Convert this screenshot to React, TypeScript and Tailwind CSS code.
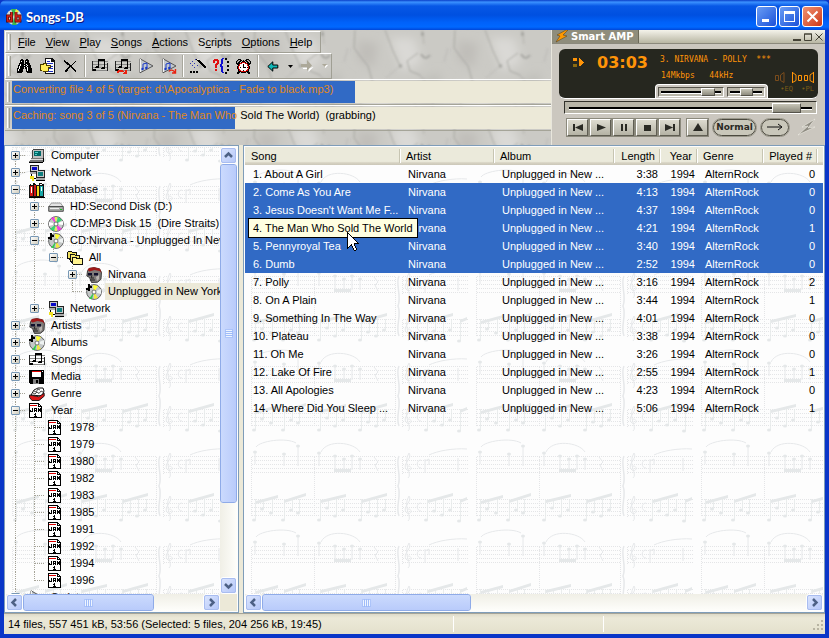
import type { ReactNode } from 'react';
import clsx from 'clsx';

const palette: Record<string, string> = {
    k: '#000000',
    w: '#ffffff',
    r: '#e00000',
    g: '#808080',
    s: '#c0c0c0',
};

function Pixels({ rows, className }: { rows: string[]; className?: string }) {
    const width = Math.max(...rows.map((r) => r.length));
    return (
        <svg width={width} height={rows.length} shapeRendering="crispEdges" className={clsx('shrink-0', className)} aria-hidden="true">
            {rows.flatMap((row, y) =>
                [...row].map((ch, x) =>
                    palette[ch] ? <rect key={`${x}-${y}`} x={x} y={y} width="1" height="1" fill={palette[ch]} /> : null
                )
            )}
        </svg>
    );
}

function Icon({ children, crisp }: { children: ReactNode; crisp?: boolean }) {
    return (
        <svg width="16" height="16" viewBox="0 0 16 16" fill="none" shapeRendering={crisp ? 'crispEdges' : 'auto'} className="shrink-0" aria-hidden="true">
            {children}
        </svg>
    );
}

const calendar = [
    'kkkkkkkkkk...',
    'kwwwwwwwwkk..',
    'krrrrrrrwkwk.',
    'kwwwwwwwwkkkk',
    'kwwwwwwwwwwwk',
    'kwwkwkkkwkwkk',
    'kwwkwkwkwkkkk',
    'kkwkwkkkwkkkk',
    'kkkkwkwkwkwkk',
    'kwwwwwwwwwwwk',
    'kwwwwwkwwwwwk',
    'kwwwwkkwwwwwk',
    'kwwwwwkwwwwwk',
    'kwwwwkkkwwwwk',
    'kkkkkkkkkkkkk',
];

const floppy = [
    'kkkkkkkkkkkkkkk',
    'kkkrrrrrrrrrkwk',
    'kkkwwwwwwwwwkkk',
    'kkkwwwwwwwwwkkk',
    'kkkwwwwwwwwwkkk',
    'kkkwwwwwwwwwkkk',
    'kkkwwwwwwwwwkkk',
    'kkkkkkkkkkkkkkk',
    'kkkkkkkkkkkkkkk',
    'kkkkggggggkkkkk',
    'kkkkgggkkgkkkkk',
    'kkkkgggkkgkkkkk',
    'kkkkgggkkgkkkkk',
    '.kkkggggggkkkkk',
];

const binoculars = [
    '....kk...kk....',
    '...kkkk.kkkk...',
    '...kwkk.kwkk...',
    '...kkkk.kkkk...',
    '..kkkkk.kkkkk..',
    '..kwkkkkkwkkk..',
    '.kkwkkkwkkwkkk.',
    '.kwkkkkkkwkkkk.',
    '.kwkkkkwkkwkkk.',
    'kkwkkkk.kkwkkkk',
    'kwkkkk...kwkkkk',
    'kwkkkk...kwkkkk',
    'kkkkkk...kkkkkk',
    'kkkkk.....kkkkk',
];

const deleteMark = [
    'k............',
    'kk.........k.',
    '.kkk......k..',
    '..kkk....k...',
    '...kkk..k....',
    '.....kkk.....',
    '.....kkk.....',
    '....kk.kk....',
    '...kk...kk...',
    '..kk.....kk..',
    '.kkk......kk.',
    '.kk........k.',
];

const alarm = [
    '..kkk.....kkk..',
    '.kgskk.k.kksgk.',
    'kgskk.kkk.kksgk',
    'kskk.krrrk.kksk',
    'kkkkrrwwwrrkkkk',
    '.kkrwwwkwwwrkk.',
    '..krwwwkwwwrk..',
    '.krwwwwkwwwwrk.',
    '.krwkwwkkkwkrk.',
    '.krwwwwwwwwwrk.',
    '..krwwwwwwwrk..',
    '..krrwwkwwrrk..',
    '..kkkrrrrrkkk..',
    '.kkk.kkkkk.kkk.',
    '.kk.........kk.',
];

const pointer = [
    'k...........',
    'kk..........',
    'kwk.........',
    'kwwk........',
    'kwwwk.......',
    'kwwwwk......',
    'kwwwwwk.....',
    'kwwwwwwk....',
    'kwwwwwwwk...',
    'kwwwwwwwwk..',
    'kwwwwwwwwwk.',
    'kwwwwwwkkkkk',
    'kwwwkwwk....',
    'kwwkkwwk....',
    'kwk..kwwk...',
    'kk...kwwk...',
    'k.....kwwk..',
    '......kwwk..',
    '.......kk...',
];

function SongIcon({ queued }: { queued?: boolean }) {
    return (
        <Icon crisp>
            <path d="M0 3h16M0 6h16M0 9h16M0 12h16" transform="translate(0 .5)" stroke="#8a8a88" />
            <path d="M0 3v10M15 5v8" transform="translate(.5 0)" stroke="#222" />
            <path d="M6 1h7v2H6zM6 1h1v8H6zM12 1h1v9h-1zM4 8h3v2H3V9h1zM10 9h3v2H9v-1h1zM1 11h3v2H1z" fill="#000" />
            {queued && <path d="M2 15v-2h1v-1h5v1h1v1h1v-2h2v4H8v-1h1v-1H4v1z" fill="#e82010" />}
        </Icon>
    );
}

function PlayIcon({ queued }: { queued?: boolean }) {
    return (
        <Icon>
            <path d="M2 .8v14L15 8z" fill="#c2c8cc" stroke="#555" />
            <path d="M2.500 1v13" stroke="#f4f4f4" />
            <path d="M5 11V6l4-1v5" stroke="#1838c8" />
            <circle cx="4.500" cy="11" r="1.200" fill="#1838c8" />
            <circle cx="8.300" cy="10" r="1.200" fill="#1838c8" />
            {queued && <path d="M8 13.500c1-2 4-2 6 1M14.500 11v4H11" stroke="#e82010" strokeWidth="1.400" />}
        </Icon>
    );
}

function DiscIcon({ notes }: { notes?: boolean }) {
    return (
        <Icon>
            <circle cx="8" cy="8" r="7.400" fill="#c4c8c8" stroke="#444" strokeWidth=".8" />
            {notes ? (
                <>
                    <path d="M8 8 7 1l5 1z" fill="#ffff30" />
                    <path d="m8 8-2 7H3z" fill="#30c850" />
                    <path d="m8 8 7-3v5z" fill="#eef2f2" />
                    <path d="m8 8 4 6-4 1z" fill="#f2e840" />
                </>
            ) : (
                <>
                    <path d="M8 8 3 2l3-1zM8 8l6 5-4 2z" fill="#f040e0" />
                    <path d="m8 8-7-2v4zM8 8l7-3v4z" fill="#fff" />
                    <path d="M8 8 10 1l4 3zM8 8l-6 5 4 2z" fill="#30d870" />
                    <path d="m8 8-1-7h2zM8 8l-1 7h2z" fill="#f4f040" />
                </>
            )}
            <circle cx="8" cy="8" r="2" fill="#fff" stroke="#555" strokeWidth=".8" />
            {notes && <path d="M0 4h2V0h2v2h2v2H4v3H2V6H0z" fill="#000" shapeRendering="crispEdges" />}
        </Icon>
    );
}

function ComputerIcon() {
    return (
        <Icon crisp>
            <path d="M4 1h10v9H3V2z" fill="#c0c0c0" />
            <path d="M4 1h10v1H4zM3 2h1v8H3zM14 1h1v9h-1z" fill="#444" />
            <path d="M5 3h7v5H5z" fill="#006868" />
            <path d="M6 4h3v1H6zM6 6h2v1H6z" fill="#50d0c8" />
            <path d="M2 10h12v1H2zM1 12h13v2H0v-1z" fill="#777" />
            <path d="M2 11h12v1H1z" fill="#ddd" />
            <path d="M0 14h14v1H0zM14 10h1v4h-1z" fill="#000" />
        </Icon>
    );
}

function NetworkIcon() {
    return (
        <Icon crisp>
            <path d="M1 0h9v7H1zM7 5h9v8H7z" fill="#222" />
            <path d="M2 1h7v5H2zM8 6h7v6H8z" fill="#c8c8c8" />
            <path d="M3 2h5v3H3z" fill="#0808c8" />
            <path d="M9 7h5v4H9z" fill="#108080" />
            <path d="M1 7h6v2H1zM7 13h9v2H7z" fill="#aaa" />
            <path d="M7 15h9v1H7zM2 9h1v2H2zM3 13h4v1H3z" fill="#000" />
            <path d="M1 11h4v3H1zM3 14h2v2H3z" fill="#f0e020" />
        </Icon>
    );
}

function DatabaseIcon() {
    return (
        <Icon crisp>
            <path d="M1 2h3V1h3v2h3V1h3v1h2v13H0V3z" fill="#111" />
            <path d="M1 4h3v10H1z" fill="#d01818" />
            <path d="M5 3h2v11H5z" fill="#d01818" />
            <path d="M8 4h2v10H8z" fill="#f0d820" />
            <path d="M11 4h3v10h-3z" fill="#18a8a8" />
            <path d="M2 2h2v1H2zM6 1h2v1H6zM11 2h2v1h-2zM2 5h1v6H2zM12 5h1v4h-1z" fill="#fff" />
            <path d="M0 15h16v1H0z" fill="#000" />
        </Icon>
    );
}

function DriveIcon() {
    return (
        <Icon>
            <path d="M3.500 4h9L15 7.500H.8z" fill="#e4e4e4" stroke="#777" strokeWidth=".7" />
            <path d="M.7 7.500h14.600v4.800H.7z" fill="#a8aaa8" stroke="#444" strokeWidth=".9" />
            <path d="M2 9h9v1H2z" fill="#eee" />
            <path d="M12 10h2v1h-2z" fill="#18c020" />
        </Icon>
    );
}

function FoldersIcon() {
    return (
        <Icon crisp>
            <path d="M0 2h1V1h4v1h5v8H2V9H0z" fill="#111" />
            <path d="M1 2h4v1h4v5H1z" fill="#f0e060" />
            <path d="M3 4h5v1h5v8H4v-1H3z" fill="#111" />
            <path d="M4 5h4v1h4v5H4z" fill="#f8e870" />
            <path d="M5 7h5v1h6v7H6v-1H5z" fill="#111" />
            <path d="M6 8h3v1h6v5H6z" fill="#fff390" />
        </Icon>
    );
}

function ArtistIcon() {
    return (
        <Icon>
            <path d="M1.500 4 3 1.500 8 .6l5.500 1.200 2 3.500-.5 7-3.500 3-6 .2-2-5L.8 9z" fill="#7e7a78" stroke="#222" strokeWidth=".8" />
            <path d="M1.500 3 3 1l5-.7 6 1.500L15.500 6l-2-2-5-1-5 1.500z" fill="#a01818" />
            <path d="M2 6h4v2.500H2zM8 6h4v2.500H8z" fill="#10102c" />
            <path d="M6 8.500 5 11h3M4 13h5" stroke="#222" />
            <path d="m10 10 3-2v4l-2 2z" fill="#b8b4b0" />
        </Icon>
    );
}

function GenreIcon() {
    return (
        <Icon>
            <path d="m2 9 3-5 4-2h5l1 3-2 5z" fill="#fff" stroke="#111" />
            <path d="m5 5 2 1 2-3 2 1M4 7l2 1 2-2 2 1.500 2-2.500 2 1" stroke="#222" strokeWidth=".8" />
            <path d="m.6 9 3 .5 6 1.200 5.600-3.500v3L10 14.500H3L.6 11.500z" fill="#d81818" stroke="#111" strokeWidth=".9" />
        </Icon>
    );
}

function AppIcon() {
    return (
        <Icon>
            <circle cx="8" cy="8" r="7.800" fill="#d8dcd8" />
            <path d="M8 8 5 0h5zM8 8l-2 8h5z" fill="#3cb850" />
            <path d="m8 8 2-8 3 2z" fill="#f0e840" />
            <path d="M5.500 3v9M1.500 7h4v5h-4zM10 3v9M10 7h4v5h-4z" stroke="#400" strokeWidth="2.800" />
            <path d="M5.500 3v9M1.500 7h4v5h-4zM10 3v9M10 7h4v5h-4z" stroke="#d82018" strokeWidth="1.500" />
        </Icon>
    );
}

/* Stone texture used behind the toolbars */
function Marble() {
    return (
        <svg className="absolute inset-0 h-full w-full" aria-hidden="true">
            <defs>
                <filter id="marble-soft" x="-20%" y="-20%" width="140%" height="140%">
                    <feGaussianBlur stdDeviation="5" />
                </filter>
                <filter id="marble-vein" x="-10%" y="-10%" width="120%" height="120%">
                    <feGaussianBlur stdDeviation="0.8" />
                </filter>
                <pattern id="marble" x="46" width="100" height="90" patternUnits="userSpaceOnUse">
                    <rect width="100" height="90" fill="#cbcac5" />
                    <g filter="url(#marble-soft)">
                        <path d="M40 8h24l8 24-20 10zM12 52l30 8-4 20-24-6z" fill="#dad9d6" />
                        <path d="M70 50l20-8 2 30-20 8z" fill="#c0bfba" />
                        <path d="M8 10l20 4-4 24-16-8z" fill="#c0beb9" />
                    </g>
                    <g stroke="#9a9994" strokeOpacity=".75" fill="none" filter="url(#marble-vein)">
                        <path d="m5 0-1 18 6 8 8 10 4 14M35 0l8 21 7 15M68 23 57 31l3 10 10 4" />
                        <path d="m72 0 2 14M22 50l12 16M70 45l14 18M90 62l10 10" strokeOpacity=".5" />
                        <path d="M0 18l-6 14M94 32l4-14M50 36 36 48M22 50 10 66l2 24M84 63l-3 27M34 66l18-4 12 9 7 19" strokeOpacity=".35" />
                        <path d="M71 24c3 5 6 5 9 1" strokeWidth="2" />
                        <path d="M71 4h3M49 36h3" strokeWidth="3" />
                    </g>
                </pattern>
            </defs>
            <rect width="100%" height="100%" fill="url(#marble)" />
        </svg>
    );
}

/* Faint sheet music behind the tree and the list */
function SheetMusic({ id }: { id: string }) {
    const low = [[9, 85], [17, 74], [26, 78], [38, 85], [46, 75], [53, 78], [74, 85], [82, 73], [90, 81], [98, 75], [115, 85], [123, 77], [131, 81], [139, 75], [181, 85], [189, 76], [197, 80], [205, 75], [214, 86]];
    const high = [[10, 17], [39, 19], [53, 11], [74, 18], [90, 21], [99, 24], [107, 21], [115, 24]];
    return (
        <svg className="absolute inset-0 h-full w-full" aria-hidden="true">
            <defs>
                <pattern id={id} x="0" y="18" width="225" height="90" patternUnits="userSpaceOnUse">
                    <g stroke="#e4e5e7" strokeDasharray="1 1" fill="none" shapeRendering="crispEdges">
                        <path transform="translate(.5 .5)" d="M6 21h144M6 25h144M6 29h144M6 33h144M6 37h144M157 21h65M157 25h65M157 29h65M157 33h65M157 37h65" />
                        <path transform="translate(.5 .5)" d="M6 64h144M6 68h144M6 72h144M6 76h144M6 80h144M157 64h65M157 68h65M157 72h65M157 76h65M157 80h65" />
                        <path transform="translate(.5 .5)" d="M6 21v60M69 21v60M150 21v60M157 21v17M157 64v17" />
                    </g>
                    <g stroke="#e6e8ea" fill="none">
                        <path d="M11 12c4-6 30-10 40-4M76 17c6-13 33-10 39 0M184 20c8-4 24-7 38-6" />
                        <path d="M10 17v12M39 19v12M53 11v20M74 18v13M90 21v14M99 24v11M107 21v14M115 24v11M129 22l4 5-3 3 3 6M213 23v13" />
                        <path d="M154 21c-4 8 3 20-1 30 4 10-3 20 1 30" strokeWidth="1.500" />
                        <path d="M163 43c5-4-6-14 1-25 4 5-7 11-3 16s8-3 2-3M163 86c5-4-6-14 1-25 4 5-7 11-3 16s8-3 2-3" />
                        <path d="M176 25c-5 0-5 8 0 8M176 68c-5 0-5 8 0 8M180 24v14m0-12 4-2v6" />
                    </g>
                    <g fill="#e5e8e9">
                        <path d="M11 66l22-6v3l-22 6zM39 65l22-7v3l-22 7zM76 65l25-6v3l-25 6zM117 65l25-7v3l-25 7zM183 65l25-7v3l-25 7zM215 65l7-3v3l-7 3zM89 34h17v3H89z" />
                        {low.map(([x, y]) => (
                            <g key={x}>
                                <ellipse cx={x} cy={y} rx="2" ry="1.500" />
                                <path d={`M${x + 1} 64h1v${y - 64}h-1z`} opacity=".8" />
                            </g>
                        ))}
                        {high.map(([x, y]) => (
                            <ellipse key={x} cx={x} cy={y} rx="2" ry="1.500" />
                        ))}
                    </g>
                </pattern>
            </defs>
            <rect width="100%" height="100%" fill={`url(#${id})`} />
        </svg>
    );
}

function TitleBar() {
    const base = 'flex h-[21px] w-[21px] items-center justify-center rounded-[3px] border border-white';
    return (
        <header className="flex h-[30px] shrink-0 items-center rounded-t-md bg-[linear-gradient(180deg,#0a3fc8,#3b91ff_7%,#0758e6_20%,#0050e0_50%,#0062fa_75%,#0068ff_90%,#0046d8)] pt-[3px] pr-[6px] pl-[6px]">
            <AppIcon />
            <h1 className="ml-1 flex-1 font-[Lato] text-[13px] leading-4 font-bold text-white [text-shadow:1px_1px_#0a1883]">Songs-DB</h1>
            <div className="flex gap-[2px]">
                <button aria-label="Minimize" className={clsx(base, 'bg-linear-to-br from-[#6a9cf4] to-[#1c4fd8]')}>
                    <svg width="13" height="13" aria-hidden="true"><path d="M2 9h7v3H2z" fill="#fff" /></svg>
                </button>
                <button aria-label="Maximize" className={clsx(base, 'bg-linear-to-br from-[#6a9cf4] to-[#1c4fd8]')}>
                    <svg width="13" height="13" shapeRendering="crispEdges" aria-hidden="true"><path d="M1 1h11v11H1zM2 4v7h9V4z" fillRule="evenodd" fill="#fff" /></svg>
                </button>
                <button aria-label="Close" className={clsx(base, 'bg-linear-to-br from-[#f09070] to-[#cc3410]')}>
                    <svg width="13" height="13" aria-hidden="true"><path d="m1.500 1.500 10 10m0-10-10 10" stroke="#fff" strokeWidth="2" /></svg>
                </button>
            </div>
        </header>
    );
}

function Grip() {
    return <span className="mx-[2px] my-[2px] w-[3px] shrink-0 self-stretch border-r border-l border-r-[#a09f94] border-l-white" />;
}

function Divider() {
    return <span className="mx-[2px] h-[22px] w-[2px] border-r border-l border-r-white border-l-[#a8a79d]" />;
}

function ToolButton({ label, children, narrow }: { label: string; children: ReactNode; narrow?: boolean }) {
    return (
        <button aria-label={label} className={clsx('flex h-full items-center justify-center', narrow ? 'w-[12px]' : 'w-[23px]')}>
            {children}
        </button>
    );
}

const menus = ['File', 'View', 'Play', 'Songs', 'Actions', 'Scripts', 'Options', 'Help'];
const mnemonic: Record<string, number> = { Scripts: 1 };

const bar = 'flex self-start border border-t-white border-r-[#a09f94] border-b-[#a09f94] border-l-white';

function Bars() {
    return (
        <div className="relative min-w-0 flex-1 overflow-hidden pl-px pt-px">
            <Marble />
            <div className="relative flex flex-col">
                <nav className={clsx(bar, 'h-[22px] items-center pr-[3px]')}>
                    <Grip />
                    {menus.map((m) => {
                        const i = mnemonic[m] ?? 0;
                        return (
                            <button key={m} className="px-[5px] leading-4">
                                {m.slice(0, i)}<u>{m[i]}</u>{m.slice(i + 1)}
                            </button>
                        );
                    })}
                </nav>
                <div className={clsx(bar, 'h-[26px] items-center')}>
                    <Grip />
                    <ToolButton label="Find"><Pixels rows={binoculars} /></ToolButton>
                    <ToolButton label="Properties">
                        <Icon crisp>
                            <path d="M5 0h7l3 3v13H5z" fill="#111" />
                            <path d="M6 1h5v3h3v11H6z" fill="#fff" />
                            <path d="M7 3h3v1H7zM7 5h6v1H7zM9 8h4v1H9zM9 10h4v1H9zM8 13h5v1H8z" fill="#2030c0" />
                            <path d="M0 6h3V5h4v2h4v3H9v3H8v1H3v-1H0z" fill="#4a3c00" />
                            <path d="M1 7h2l1-1h2v2h4v1H8v4H3l-2-1z" fill="#ffec58" />
                        </Icon>
                    </ToolButton>
                    <ToolButton label="Delete"><Pixels rows={deleteMark} /></ToolButton>
                    <Divider />
                    <ToolButton label="Add song"><SongIcon /></ToolButton>
                    <ToolButton label="Queue song"><SongIcon queued /></ToolButton>
                    <ToolButton label="Play song"><PlayIcon /></ToolButton>
                    <ToolButton label="Play queue"><PlayIcon queued /></ToolButton>
                    <Divider />
                    <ToolButton label="Wizard">
                        <Icon crisp>
                            <path d="M6 1h3v1h1v1h1v1h1v1h1v1h1v1h1v1h1v2h-2V9h-1V8h-1V7h-1V6h-1V5H9V4H8V3H7V2H6z" fill="#000" />
                            <path d="M7 1h2v1H7z" fill="#eee" />
                            <path d="M2 3h1v1H2zM0 5h1v1H0zM4 5h1v1H4zM2 7h1v1H2zM4 9h1v1H4zM7 7h1v1H7zM5 1h1v1H5z" fill="#3038b0" />
                            <path d="M0 13h2v2H0zM3 13h2v2H3zM6 13h2v2H6z" fill="#000" />
                        </Icon>
                    </ToolButton>
                    <ToolButton label="Script help">
                        <Icon crisp>
                            <path d="M0 2h1V1h4v1h1v4H5v1H4v3H2V6h1V5h1V3H2v2H0zM2 11h2v2H2z" fill="#e01010" />
                            <path d="M11 0v1h-1v5H9v2h1v6h1v1H9v-1H8V9H7V6h1V1h1V0z" fill="#1010d0" />
                            <path d="M12 0h2v2h-2zM14 3h2v2h-2zM14 7h2v2h-2zM14 11h2v2h-2zM12 14h2v2h-2z" fill="#000" />
                        </Icon>
                    </ToolButton>
                    <ToolButton label="Alarm"><Pixels rows={alarm} /></ToolButton>
                    <Divider />
                    <ToolButton label="Back">
                        <svg width="12" height="11" aria-hidden="true"><path d="m.8 5.500 5-4.700V4h5v3h-5v3.200z" fill="#10b8b8" stroke="#000" /></svg>
                    </ToolButton>
                    <ToolButton label="Back history" narrow>
                        <svg width="5" height="3" aria-hidden="true"><path d="M0 0h5L2.500 3z" /></svg>
                    </ToolButton>
                    <ToolButton label="Forward">
                        <svg width="13" height="12" aria-hidden="true"><path d="m12.500 7-5 5V9H2V8h6z" fill="#fff" /><path d="M11 5.500 6 0v4H0v3h6v4z" fill="#aca899" /></svg>
                    </ToolButton>
                    <ToolButton label="Forward history" narrow>
                        <svg width="6" height="4" aria-hidden="true"><path d="M1 1h5L3.500 4z" fill="#fff" /><path d="M0 0h5L2.500 3z" fill="#aca899" /></svg>
                    </ToolButton>
                </div>
            </div>
            <div className="relative">
                <ProgressRow value={63.6} done="Converting file 4 of 5 (target: d:\Apocalyptica - Fade to black.mp3)" />
                <ProgressRow value={41.4} done="Caching: song 3 of 5 (Nirvana - The Man Who" rest=" Sold The World)  (grabbing)" />
            </div>
        </div>
    );
}

function ProgressRow({ value, done, rest }: { value: number; done: string; rest?: string }) {
    return (
        <div className="flex h-[26px] items-stretch border-t border-b border-t-white border-b-[#a5a498]">
            <Grip />
            <div role="progressbar" aria-valuenow={value} aria-label={done} className="relative my-[1px] flex-1 overflow-hidden bg-[#ece9d8]">
                <div className="absolute inset-y-0 left-0 bg-[#316ac5]" style={{ width: `${value}%` }} />
                <p className="relative pl-px leading-[16px] whitespace-pre text-black">
                    <span className="text-[#e08820]">{done}</span>{rest}
                </p>
            </div>
        </div>
    );
}

const sliderBase =
    'block h-full w-full appearance-none bg-transparent [&::-webkit-slider-runnable-track]:bg-[linear-gradient(#0000_40%,#000_40%,#000_60%,#fff_60%,#fff_70%,#0000_70%)] [&::-webkit-slider-thumb]:appearance-none [&::-webkit-slider-thumb]:border [&::-webkit-slider-thumb]:border-t-white [&::-webkit-slider-thumb]:border-l-white [&::-webkit-slider-thumb]:border-r-[#55534a] [&::-webkit-slider-thumb]:border-b-[#55534a] [&::-webkit-slider-thumb]:bg-linear-to-b [&::-webkit-slider-thumb]:from-[#c8c6b8] [&::-webkit-slider-thumb]:to-[#8d8b7e]';

const transport = [
    { label: 'Previous', d: 'M2 2h2v7H2zM12 2v7L4 5.500z' },
    { label: 'Play', d: 'M3 2v7l9-3.500z' },
    { label: 'Pause', d: 'M4 2h2v7H4zM8 2h2v7H8z' },
    { label: 'Stop', d: 'M4 3h7v6H4z' },
    { label: 'Next', d: 'M10 2h2v7h-2zM2 2v7l8-3.500z' },
];

function Player() {
    const chip = 'flex h-[17px] w-[21px] items-center justify-center border border-t-white border-r-[#5f5d52] border-b-[#5f5d52] border-l-white bg-linear-to-b from-[#dddbcf] to-[#b5b3a5] outline outline-[#8b897c]';
    const slot = 'h-[10px] border border-t-[#55534a] border-r-white border-b-white border-l-[#55534a] bg-[#b9b6a9] px-[2px]';
    return (
        <section aria-label="Smart AMP" className="flex w-[274px] shrink-0 flex-col border-l border-[#e8e6dc] bg-[#cbc7bf]">
            <div className="flex h-[14px] items-stretch border-b border-[#8b897c] bg-linear-to-b from-[#f4f3ea] to-[#b9b7a4]">
                <div className="flex w-[87px] items-center gap-[2px] border-r border-[#6b6958] bg-[#8f8d7c] pl-[3px]">
                    <svg width="14" height="13" aria-hidden="true"><path d="m11 0-9 5 3 1-4 6 11-6-4-1 5-5z" fill="#ff9800" stroke="#5a4620" strokeWidth=".6" /></svg>
                    <h2 className="font-['DejaVu_Sans'] text-[10px] leading-3 font-bold whitespace-nowrap text-white">Smart AMP</h2>
                </div>
                <div className="flex flex-1 items-center justify-end gap-[3px] pr-[2px]">
                    <button aria-label="Minimize player"><svg width="8" height="8" aria-hidden="true"><path d="M0 6h8v2H0z" fill="#444236" /></svg></button>
                    <button aria-label="Maximize player"><svg width="8" height="8" aria-hidden="true"><path d="M.5 1v6.500h7V1zM0 1h8" fill="none" stroke="#444236" /></svg></button>
                    <button aria-label="Close player"><svg width="8" height="8" aria-hidden="true"><path d="m.5.5 7 7m0-7-7 7" stroke="#444236" /></svg></button>
                </div>
            </div>
            <div className="mx-[7px] mt-[5px] flex h-[50px] rounded-md border-b border-white bg-[#26271f] font-['DejaVu_Sans_Mono'] text-[8px] text-[#ff9408]">
                <div className="flex w-[96px] shrink-0 items-start pt-[6px] pl-[14px]">
                    <svg width="13" height="12" className="mt-[2px]" aria-hidden="true" shapeRendering="crispEdges">
                        <path d="M0 1h4v3H0zM6 1h1v1h1v1h1v1h1v1h1v1h-1v1H9v1H8v1H6z" fill="#ff9408" />
                        <path d="M0 7h4v3H0z" fill="#8a6a10" />
                    </svg>
                    <time className="ml-[11px] font-['DejaVu_Sans'] text-[16px] leading-4 font-bold">03:03</time>
                </div>
                <div className="flex min-w-0 flex-1 flex-col">
                    <p className="pt-[6px] pl-[5px] leading-[10px] whitespace-pre">3. NIRVANA - POLLY  ***</p>
                    <div className="flex flex-1 justify-between">
                        <div className="flex flex-col justify-between">
                            <p className="pt-[6px] pl-[6px] leading-[10px] whitespace-pre">14Mkbps   44kHz</p>
                            <div className="flex h-[14px] gap-[3px] rounded-t-sm border border-b-0 border-white bg-[#cbc7bf] px-[2px] pt-[2px] pb-px">
                                <div className={clsx(slot, 'w-[66px]')}>
                                    <input type="range" aria-label="Volume" defaultValue={86} className={clsx(sliderBase, '[&::-webkit-slider-thumb]:h-[8px] [&::-webkit-slider-thumb]:w-[14px]')} />
                                </div>
                                <div className={clsx(slot, 'w-[38px]')}>
                                    <input type="range" aria-label="Balance" defaultValue={50} className={clsx(sliderBase, '[&::-webkit-slider-thumb]:h-[8px] [&::-webkit-slider-thumb]:w-[13px]')} />
                                </div>
                            </div>
                        </div>
                        <div className="flex flex-col items-end justify-between pt-[6px] pr-[4px] pb-[4px]">
                            <svg width="40" height="13" fill="none" aria-hidden="true">
                                <path d="M1.500 4.500h3v5h-3zM10 1.500 6.500 4v5.500l3.500 2z" stroke="#7a4c1c" />
                                <path d="M18.500 1v11M18.500 1.500 22 4v5.500l-3.500 2M24.500 4.500h3v5h-3zM30.500 4.500h3v5h-3zM39.500 1v11M39.500 1.500 36 4v5.500l3.500 2" stroke="#ff9408" />
                            </svg>
                            <p className="text-[7px] leading-[9px] whitespace-pre text-[#7a5c18]">•EQ  •PL</p>
                        </div>
                    </div>
                </div>
            </div>
            <div className="mr-[8px] ml-[12px] mt-[2px] h-[13px] border border-t-[#33322c] border-r-white border-b-white border-l-[#33322c] bg-[#b9b6a9] px-[4px]">
                <input type="range" aria-label="Position" defaultValue={95} className={clsx(sliderBase, '[&::-webkit-slider-thumb]:h-[10px] [&::-webkit-slider-thumb]:w-[29px]')} />
            </div>
            <div className="mt-[4px] flex items-center gap-[2px] pr-[8px] pl-[15px]">
                {transport.map((t) => (
                    <button key={t.label} aria-label={t.label} className={chip}>
                        <svg width="14" height="11" aria-hidden="true"><path d={t.d} fill="#2a2a24" /></svg>
                    </button>
                ))}
                <button aria-label="Eject" className={clsx(chip, 'ml-[5px]')}>
                    <svg width="14" height="11" aria-hidden="true"><path d="M7 1 2 9h10z" fill="#2a2a24" /></svg>
                </button>
                <button className="ml-[3px] flex h-[17px] w-[43px] items-center justify-center rounded-full border border-[#4b493f] bg-[#c9c7ba] font-['DejaVu_Sans'] text-[9px] leading-3 font-bold text-[#2a2a24] outline outline-[#99978a]">Normal</button>
                <button aria-label="Repeat" className="ml-[3px] flex h-[17px] w-[28px] items-center justify-center rounded-full border border-[#4b493f] bg-[#c9c7ba] outline outline-[#99978a]">
                    <svg width="18" height="8" aria-hidden="true"><path d="M1 4h15M12 1l4 3-4 3" fill="none" stroke="#111" /></svg>
                </button>
                <svg width="20" height="18" className="ml-auto" aria-hidden="true">
                    <path d="m18 1-13 8 6-1L1 17l17-8-7 1z" fill="#8f8c82" stroke="#f0eee6" strokeWidth=".6" />
                </svg>
            </div>
        </section>
    );
}

type Node = { label: string; icon: ReactNode; leaf?: boolean; selected?: boolean; children?: Node[] };

const years = ['1978', '1979', '1980', '1982', '1983', '1985', '1991', '1992', '1994', '1996'];

const tree: Node[] = [
    { label: 'Computer', icon: <ComputerIcon /> },
    { label: 'Network', icon: <NetworkIcon /> },
    {
        label: 'Database', icon: <DatabaseIcon />, children: [
            { label: 'HD:Second Disk (D:)', icon: <DriveIcon /> },
            { label: 'CD:MP3 Disk 15  (Dire Straits)', icon: <DiscIcon /> },
            {
                label: 'CD:Nirvana - Unplugged In New York', icon: <DiscIcon notes />, children: [
                    {
                        label: 'All', icon: <FoldersIcon />, children: [
                            { label: 'Nirvana', icon: <ArtistIcon /> },
                            { label: 'Unplugged in New York', icon: <DiscIcon notes />, leaf: true, selected: true },
                        ],
                    },
                ],
            },
            { label: 'Network', icon: <NetworkIcon /> },
        ],
    },
    { label: 'Artists', icon: <ArtistIcon /> },
    { label: 'Albums', icon: <DiscIcon notes /> },
    { label: 'Songs', icon: <SongIcon /> },
    { label: 'Media', icon: <Pixels rows={floppy} /> },
    { label: 'Genre', icon: <GenreIcon /> },
    { label: 'Year', icon: <Pixels rows={calendar} />, children: years.map((y) => ({ label: y, icon: <Pixels rows={calendar} />, leaf: true })) },
    { label: 'Scripts', icon: <PlayIcon /> },
];

function Branch({ nodes, guides }: { nodes: Node[]; guides: boolean[] }) {
    return (
        <>
            {nodes.map((n, i) => {
                const last = i === nodes.length - 1 && guides.length > 0;
                const first = i === 0 && guides.length === 0;
                return (
                    <div key={n.label} role="treeitem" aria-selected={!!n.selected} aria-expanded={n.leaf ? undefined : !!n.children}>
                        <div className="flex h-[17px] items-center">
                            {guides.map((on, g) => (
                                <span key={g} className="flex h-full w-[19px] shrink-0 justify-center">
                                    {on && <span className="w-px border-l border-dotted border-[#a5a397]" />}
                                </span>
                            ))}
                            <span className="relative h-full w-[19px] shrink-0">
                                <span className={clsx('absolute left-[9px] border-l border-dotted border-[#a5a397]', first ? 'top-[8px]' : 'top-0', last ? 'bottom-[8px]' : 'bottom-0')} />
                                <span className="absolute top-[8px] right-0 left-[9px] border-t border-dotted border-[#a5a397]" />
                                {!n.leaf && (
                                    <button aria-label={n.children ? 'Collapse' : 'Expand'} className="absolute top-[4px] left-[5px] flex h-[9px] w-[9px] items-center justify-center rounded-[1px] border border-[#7898b5] bg-linear-to-br from-white to-[#d0ccbc]">
                                        <svg width="5" height="5" shapeRendering="crispEdges" aria-hidden="true"><path d={n.children ? 'M0 2h5v1H0z' : 'M0 2h5v1H0zM2 0h1v5H2z'} /></svg>
                                    </button>
                                )}
                            </span>
                            <span className="ml-[3px] flex w-[18px] shrink-0 items-center pl-px">{n.icon}</span>
                            <span className={clsx('ml-[2px] h-[17px] px-[3px] leading-[17px] whitespace-pre', n.selected && 'bg-[#ece9d8]')}>{n.label}</span>
                        </div>
                        {n.children && <div role="group"><Branch nodes={n.children} guides={[...guides, !last]} /></div>}
                    </div>
                );
            })}
        </>
    );
}

const arrows = {
    up: 'm1 6 3.500-3.500L8 6',
    down: 'm1 3 3.500 3.500L8 3',
    left: 'M6 1 2.500 4.500 6 8',
    right: 'm3 1 3.500 3.500L3 8',
};

function ArrowButton({ dir }: { dir: keyof typeof arrows }) {
    return (
        <button aria-label={`Scroll ${dir}`} className="flex h-[17px] w-[17px] shrink-0 items-center justify-center rounded-[3px] border border-white bg-linear-to-br from-[#dce6fe] to-[#b4c6f8] outline outline-[#a9bdf0] -outline-offset-2">
            <svg width="9" height="9" aria-hidden="true"><path d={arrows[dir]} fill="none" stroke="#4d6185" strokeWidth="2.500" /></svg>
        </button>
    );
}

function ScrollBar({ vertical, size }: { vertical?: boolean; size: number }) {
    return (
        <div className={clsx('flex min-h-0 min-w-0', vertical ? 'w-[17px] flex-col bg-linear-to-r from-[#f0efe6] to-[#fefefb]' : 'h-[17px] flex-1 bg-linear-to-b from-[#f0efe6] to-[#fefefb]')}>
            <ArrowButton dir={vertical ? 'up' : 'left'} />
            <div className="min-h-0 min-w-0 flex-1">
                <div
                    className={clsx('flex items-center justify-center rounded-[3px] border border-white outline outline-[#8fabe8] -outline-offset-1', vertical ? 'w-full bg-linear-to-r from-[#cbdafd] to-[#b9cbfb]' : 'h-full bg-linear-to-b from-[#cbdafd] to-[#b9cbfb]')}
                    style={vertical ? { height: `${size}%` } : { width: `${size}%` }}
                >
                    <span className={clsx('flex justify-between', vertical ? 'h-[7px] w-[6px] flex-col' : 'h-[6px] w-[7px]')}>
                        {[0, 1, 2, 3].map((i) => (
                            <span key={i} className={clsx('bg-[#eef4fe] outline-1 outline-[#8cb0f8]/40', vertical ? 'h-px' : 'w-px')} />
                        ))}
                    </span>
                </div>
            </div>
            <ArrowButton dir={vertical ? 'down' : 'right'} />
        </div>
    );
}

const songs = [
    { title: '1. About A Girl', length: '3:38', played: 0 },
    { title: '2. Come As You Are', length: '4:13', played: 0 },
    { title: "3. Jesus Doesn't Want Me F...", length: '4:37', played: 0 },
    { title: '4. The Man Who Sold The World', length: '4:21', played: 1, hint: true },
    { title: '5. Pennyroyal Tea', length: '3:40', played: 0 },
    { title: '6. Dumb', length: '2:52', played: 0 },
    { title: '7. Polly', length: '3:16', played: 2 },
    { title: '8. On A Plain', length: '3:44', played: 1 },
    { title: '9. Something In The Way', length: '4:01', played: 0 },
    { title: '10. Plateau', length: '3:38', played: 0 },
    { title: '11. Oh Me', length: '3:26', played: 0 },
    { title: '12. Lake Of Fire', length: '2:55', played: 1 },
    { title: '13. All Apologies', length: '4:23', played: 0 },
    { title: '14. Where Did You Sleep ...', length: '5:06', played: 1 },
];

const columns = [
    { name: 'Song', width: 'w-[155px]' },
    { name: 'Artist', width: 'w-[94px]' },
    { name: 'Album', width: 'w-[120px]' },
    { name: 'Length', width: 'w-[46px]', right: true },
    { name: 'Year', width: 'w-[37px]', right: true },
    { name: 'Genre', width: 'w-[66px]' },
    { name: 'Played #', width: 'w-[54px]', right: true },
];

function SongTable() {
    return (
        <table className="relative w-full table-fixed border-collapse leading-[18px] whitespace-nowrap">
            <thead className="h-[18px] bg-[linear-gradient(#ebeadb_80%,#d6d2c2_88%,#cbc7b8)]">
                <tr className="h-[18px]">
                    {columns.map((c) => (
                        <th key={c.name} scope="col" className={clsx('p-0 font-normal', c.width)}>
                            <div className={clsx('my-[2px] h-[14px] border-r border-[#c7c5b2] leading-[14px] shadow-[1px_0_#fff]', c.right ? 'pr-[4px] text-right' : 'pl-[6px] text-left')}>{c.name}</div>
                        </th>
                    ))}
                    <td className="p-0" />
                </tr>
            </thead>
            <tbody>
                {songs.map((s, i) => (
                    <tr key={s.title} aria-selected={i >= 1 && i <= 5} className={clsx('h-[18px]', i >= 1 && i <= 5 && 'bg-[#316ac5] text-white')}>
                        <td className="relative p-0 pl-[8px]">
                            {s.hint ? (
                                <span role="tooltip" className="absolute -top-px left-[3px] z-10 h-[20px] border border-black bg-[#ffffe1] px-[4px] text-black">{s.title}</span>
                            ) : s.title}
                            {s.hint && <span className="absolute top-[13px] left-[102px] z-20"><Pixels rows={pointer} /></span>}
                        </td>
                        <td className="p-0 pl-[8px]">Nirvana</td>
                        <td className="p-0 pl-[8px]">Unplugged in New ...</td>
                        <td className="p-0 pr-[2px] text-right">{s.length}</td>
                        <td className="p-0 pr-[2px] text-right">1994</td>
                        <td className="p-0 pl-[8px]">AlternRock</td>
                        <td className="p-0 pr-[2px] text-right">{s.played}</td>
                        <td className="p-0" />
                    </tr>
                ))}
            </tbody>
        </table>
    );
}

export default function App() {
    return (
        <div className="flex h-screen flex-col bg-[#0a36c8] font-['Liberation_Sans',sans-serif] text-[11px] text-black">
            <TitleBar />
            <div className="mx-[4px] mb-[4px] flex min-h-0 flex-1 flex-col bg-[#ece9d8]">
                <div className="flex h-[115px] shrink-0">
                    <Bars />
                    <Player />
                </div>
                <main className="flex min-h-0 flex-1">
                    <aside className="flex w-[235px] shrink-0 flex-col border border-[#7f9db9] bg-[#fdfdfd] p-px">
                        <div className="flex min-h-0 flex-1">
                            <div className="relative min-w-0 flex-1 overflow-hidden">
                                <SheetMusic id="notes-tree" />
                                <div role="tree" aria-label="Library" className="relative">
                                    <Branch nodes={tree} guides={[]} />
                                </div>
                            </div>
                            <ScrollBar vertical size={82} />
                        </div>
                        <div className="flex">
                            <ScrollBar size={73} />
                            <span className="h-[17px] w-[17px] bg-[#ece9d8]" />
                        </div>
                    </aside>
                    <section aria-label="Songs" className="ml-[4px] flex min-w-0 flex-1 flex-col border border-[#7f9db9] bg-[#fdfdfd] p-px">
                        <div className="relative min-h-0 flex-1 overflow-hidden">
                            <SheetMusic id="notes-list" />
                            <SongTable />
                        </div>
                        <div className="flex">
                            <ScrollBar size={38.5} />
                        </div>
                    </section>
                </main>
                <footer className="flex h-[21px] shrink-0 items-stretch border-t border-[#a5a498] bg-linear-to-b from-[#dedac8] via-[#ece9d8] via-20% to-[#e4e0cc] py-[2px] leading-[16px]">
                    <p className="flex-1 border-r border-white pl-[4px]">14 files, 557 451 kB, 53:56 (Selected: 5 files, 204 256 kB, 19:45)</p>
                    <span className="w-[150px] border-r border-white" />
                    <div className="flex w-[221px] items-end justify-end">
                        <svg width="12" height="12" shapeRendering="crispEdges" aria-hidden="true">
                            <path d="M8 0h2v2H8zM4 4h2v2H4zM8 4h2v2H8zM0 8h2v2H0zM4 8h2v2H4zM8 8h2v2H8z" fill="#b8b4a2" />
                        </svg>
                    </div>
                </footer>
            </div>
        </div>
    );
}
